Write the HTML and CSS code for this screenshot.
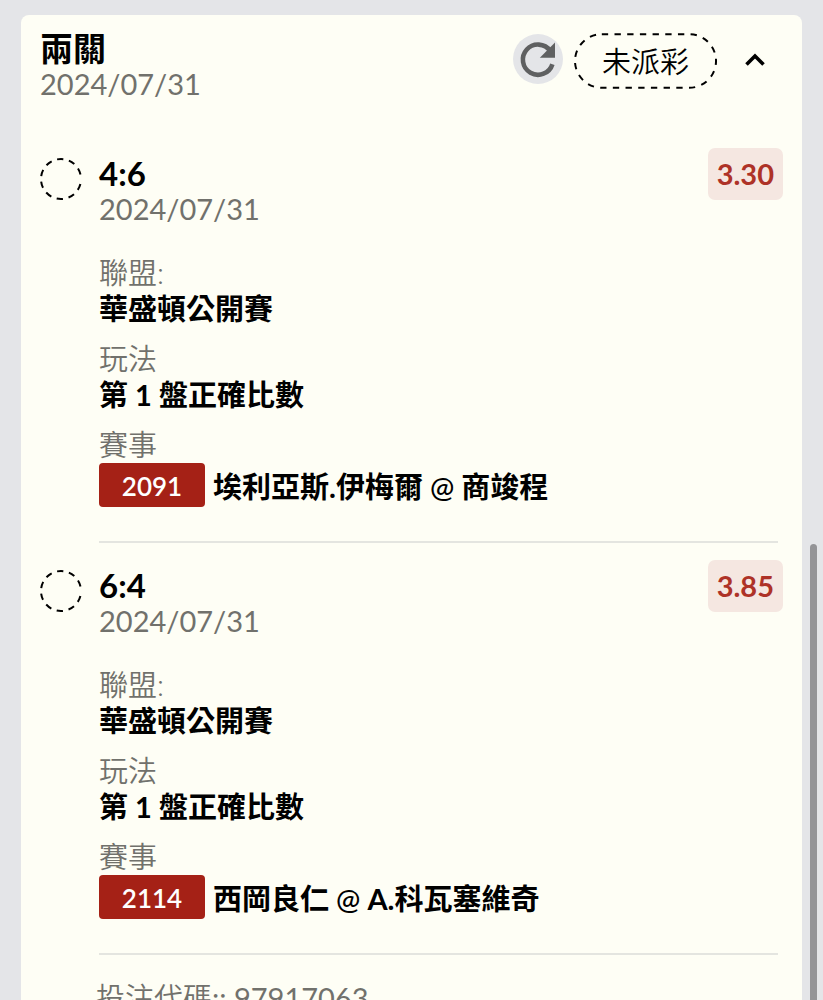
FILE: index.html
```html
<!DOCTYPE html>
<html lang="zh-Hant">
<head>
    <meta charset="UTF-8">
    <meta name="viewport" content="width=device-width, initial-scale=1.0">
    <title>投注紀錄</title>
    <link rel="stylesheet" href="styles.css">
</head>
<body>
    <main class="bet-card">
        <header class="bet-header">
            <div class="bet-title">
                <h1>兩關</h1>
                <p class="date">2024/07/31</p>
            </div>
            <div class="bet-actions">
                <button type="button" class="btn-refresh" aria-label="重新整理">
                    <svg viewBox="0 0 50 50" width="50" height="50">
                        <path d="M39.4 30.2 A15.1 15.1 0 1 1 37.3 16.9" fill="none" stroke="#5f6061" stroke-width="4.6"/>
                        <path d="M42 8.5 V23.8 H26.8 Z" fill="#5f6061"/>
                    </svg>
                </button>
                <span class="status">
                    <svg class="status-line" viewBox="0 0 144 56"><rect x="1" y="1" width="142" height="54" rx="27" pathLength="351" stroke-dasharray="6.5 6.5"/></svg>
                    未派彩
                </span>
                <button type="button" class="btn-toggle" aria-label="收合">
                    <svg viewBox="0 0 20 13" width="20" height="13">
                        <path d="M1.5 11.5 L10 3 L18.5 11.5" fill="none" stroke="#000" stroke-width="3.6"/>
                    </svg>
                </button>
            </div>
        </header>

        <!-- 第一關 -->
        <section class="leg">
            <svg class="leg-mark" viewBox="0 0 42 42"><circle cx="21" cy="21" r="20" pathLength="124" stroke-dasharray="6.4 5.6" stroke-dashoffset="-5"/></svg>
            <div class="leg-body">
                <div class="leg-top">
                    <div>
                        <h2>4:6</h2>
                        <p class="date">2024/07/31</p>
                    </div>
                    <span class="odds">3.30</span>
                </div>
                <dl class="leg-info">
                    <dt>聯盟:</dt>
                    <dd>華盛頓公開賽</dd>
                    <dt>玩法</dt>
                    <dd>第 1 盤正確比數</dd>
                    <dt>賽事</dt>
                    <dd class="match"><span class="match-no">2091</span><span>埃利亞斯.伊梅爾 <span class="at">@</span> 商竣程</span></dd>
                </dl>
            </div>
        </section>

        <!-- 第二關 -->
        <section class="leg">
            <svg class="leg-mark" viewBox="0 0 42 42"><circle cx="21" cy="21" r="20" pathLength="124" stroke-dasharray="6.4 5.6" stroke-dashoffset="-5"/></svg>
            <div class="leg-body">
                <div class="leg-top">
                    <div>
                        <h2>6:4</h2>
                        <p class="date">2024/07/31</p>
                    </div>
                    <span class="odds">3.85</span>
                </div>
                <dl class="leg-info">
                    <dt>聯盟:</dt>
                    <dd>華盛頓公開賽</dd>
                    <dt>玩法</dt>
                    <dd>第 1 盤正確比數</dd>
                    <dt>賽事</dt>
                    <dd class="match"><span class="match-no">2114</span><span>西岡良仁 <span class="at">@</span> A.科瓦塞維奇</span></dd>
                </dl>
            </div>
        </section>

        <footer class="bet-code">投注代碼<span class="code-no">:: 97917063</span></footer>
    </main>
    <div class="scroll-thumb"></div>
</body>
</html>
```

FILE: styles.css
```css
* {
    box-sizing: border-box;
}
body {
    margin: 0;
    height: 100vh;
    overflow: hidden;
    padding: 15px 21px 0;
    background-color: #e4e5e8;
    color: #000;
    font-family: Lato, "Noto Sans CJK TC", sans-serif;
    font-size: 29px;
    line-height: 36px;
}
h1, h2, p, dl, dd {
    margin: 0;
}
h1, h2 {
    font-size: 33px;
    font-weight: 700;
    line-height: 36px;
}
button {
    display: flex;
    align-items: center;
    justify-content: center;
    padding: 0;
    border: none;
    background: none;
    cursor: pointer;
}
.bet-card {
    padding: 15px 19px;
    border-radius: 8px;
    background-color: #fefef5;
}
.date {
    color: #71716c;
}

/* 標題列 */
.bet-header {
    display: flex;
    justify-content: space-between;
    align-items: flex-start;
    margin-bottom: 46px;
}
.bet-actions {
    display: flex;
    align-items: center;
    gap: 11px;
    padding: 3px 7px 0 0;
}
.btn-refresh {
    width: 50px;
    height: 50px;
    margin-bottom: 4px;
    border-radius: 50%;
    background-color: #e4e5e8;
}
.status {
    position: relative;
    padding: 11px 28px 9px;
    font-weight: 350;
}
.status-line {
    position: absolute;
    inset: 0;
    width: 100%;
    height: 100%;
}
.status-line rect, .leg-mark circle {
    fill: none;
    stroke: #000;
    stroke-width: 2;
}
.btn-toggle {
    width: 42px;
    height: 50px;
    margin: 0 0 4px 6px;
}

/* 每一關 */
.leg {
    display: flex;
    gap: 17px;
}
.leg-mark {
    flex: none;
    width: 42px;
    height: 42px;
    margin-top: 10px;
}
.leg-body {
    flex: 1;
}
.leg-top {
    display: flex;
    justify-content: space-between;
    align-items: flex-start;
    height: 107px;
}
.leg-top h2 {
    margin-top: 7px;
}
.odds {
    padding: 8px 9px;
    border-radius: 7px;
    background-color: #f5e7e1;
    color: #ae3227;
    font-weight: 700;
}
.leg-info {
    margin-right: 5px;
    margin-bottom: 17px;
    padding-bottom: 34px;
    border-bottom: 2px solid #e4e5e0;
}
.leg-info dt {
    color: #71716c;
    font-weight: 350;
}
.leg-info dd {
    margin-bottom: 14px;
    font-weight: 700;
}
.leg-info .match {
    display: flex;
    align-items: flex-end;
    gap: 8px;
    margin-bottom: 0;
}
.match-no {
    width: 106px;
    padding: 5px 0 3px;
    border-radius: 4px;
    background-color: #a52116;
    color: #fff;
    font-size: 26px;
    font-weight: 600;
    text-align: center;
}
.match > span:last-child {
    padding-bottom: 2px;
}
.at {
    font-weight: 500;
}
.bet-code {
    margin-top: -9px;
    padding: 17px 0 0 56px;
    color: #71716c;
    font-weight: 350;
}
.code-no {
    font-weight: 400;
}

/* 捲軸 */
.scroll-thumb {
    position: fixed;
    top: 544px;
    right: 6px;
    bottom: -8px;
    width: 7px;
    border-radius: 4px;
    background-color: #949497;
}
```
